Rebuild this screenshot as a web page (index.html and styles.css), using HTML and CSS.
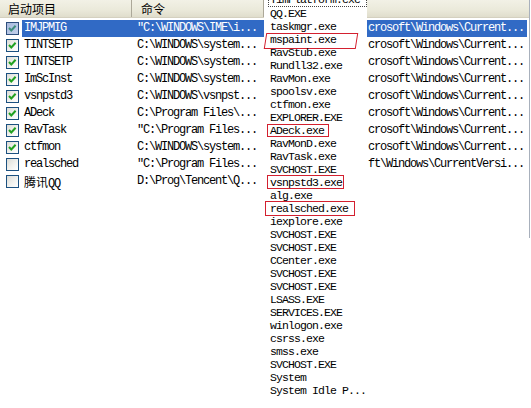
FILE: index.html
```
<!DOCTYPE html>
<html lang="zh-CN">
<head>
<meta charset="utf-8">
<title>启动项目</title>
<link rel="stylesheet" href="styles.css">
</head>
<body>
<div class="screen">
  <div class="listview">
    <div class="head">
      <div class="hcell">启动项目</div>
      <div class="hcell">命令</div>
      <div class="hcell"></div>
    </div>
    <div class="rows">
      <div class="row sel">
        <span class="box"><span class="cb on"><svg viewBox="0 0 11 11"><polyline points="2,5 4.3,7.5 8.6,2.8"/></svg></span></span>
        <span class="c name">IMJPMIG</span>
        <span class="c cmd">"C:\WINDOWS\IME\i...</span>
        <span class="c gap"></span>
        <span class="c loc">crosoft\Windows\Current...</span>
      </div>
      <div class="row">
        <span class="box"><span class="cb on"><svg viewBox="0 0 11 11"><polyline points="2,5 4.3,7.5 8.6,2.8"/></svg></span></span>
        <span class="c name">TINTSETP</span>
        <span class="c cmd">C:\WINDOWS\system...</span>
        <span class="c gap"></span>
        <span class="c loc">crosoft\Windows\Current...</span>
      </div>
      <div class="row">
        <span class="box"><span class="cb on"><svg viewBox="0 0 11 11"><polyline points="2,5 4.3,7.5 8.6,2.8"/></svg></span></span>
        <span class="c name">TINTSETP</span>
        <span class="c cmd">C:\WINDOWS\system...</span>
        <span class="c gap"></span>
        <span class="c loc">crosoft\Windows\Current...</span>
      </div>
      <div class="row">
        <span class="box"><span class="cb on"><svg viewBox="0 0 11 11"><polyline points="2,5 4.3,7.5 8.6,2.8"/></svg></span></span>
        <span class="c name">ImScInst</span>
        <span class="c cmd">C:\WINDOWS\system...</span>
        <span class="c gap"></span>
        <span class="c loc">crosoft\Windows\Current...</span>
      </div>
      <div class="row">
        <span class="box"><span class="cb on"><svg viewBox="0 0 11 11"><polyline points="2,5 4.3,7.5 8.6,2.8"/></svg></span></span>
        <span class="c name">vsnpstd3</span>
        <span class="c cmd">C:\WINDOWS\vsnpst...</span>
        <span class="c gap"></span>
        <span class="c loc">crosoft\Windows\Current...</span>
      </div>
      <div class="row">
        <span class="box"><span class="cb on"><svg viewBox="0 0 11 11"><polyline points="2,5 4.3,7.5 8.6,2.8"/></svg></span></span>
        <span class="c name">ADeck</span>
        <span class="c cmd">C:\Program Files\...</span>
        <span class="c gap"></span>
        <span class="c loc">crosoft\Windows\Current...</span>
      </div>
      <div class="row">
        <span class="box"><span class="cb on"><svg viewBox="0 0 11 11"><polyline points="2,5 4.3,7.5 8.6,2.8"/></svg></span></span>
        <span class="c name">RavTask</span>
        <span class="c cmd">"C:\Program Files...</span>
        <span class="c gap"></span>
        <span class="c loc">crosoft\Windows\Current...</span>
      </div>
      <div class="row">
        <span class="box"><span class="cb on"><svg viewBox="0 0 11 11"><polyline points="2,5 4.3,7.5 8.6,2.8"/></svg></span></span>
        <span class="c name">ctfmon</span>
        <span class="c cmd">C:\WINDOWS\system...</span>
        <span class="c gap"></span>
        <span class="c loc">crosoft\Windows\Current...</span>
      </div>
      <div class="row">
        <span class="box"><span class="cb"></span></span>
        <span class="c name">realsched</span>
        <span class="c cmd">"C:\Program Files...</span>
        <span class="c gap"></span>
        <span class="c loc">ft\Windows\CurrentVersi...</span>
      </div>
      <div class="row">
        <span class="box"><span class="cb"></span></span>
        <span class="c name"><span class="cjk">腾讯</span>QQ</span>
        <span class="c cmd">D:\Prog\Tencent\Q...</span>
        <span class="c gap"></span>
        <span class="c loc"></span>
      </div>
    </div>
  </div>

  <!-- process list pasted over the window -->
  <ul class="procs">
    <li class="focus">TimPlatform.exe</li>
    <li>QQ.EXE</li>
    <li>taskmgr.exe</li>
    <li class="mark m1">mspaint.exe</li>
    <li>RavStub.exe</li>
    <li>Rundll32.exe</li>
    <li>RavMon.exe</li>
    <li>spoolsv.exe</li>
    <li>ctfmon.exe</li>
    <li>EXPLORER.EXE</li>
    <li class="mark m2">ADeck.exe</li>
    <li>RavMonD.exe</li>
    <li>RavTask.exe</li>
    <li>SVCHOST.EXE</li>
    <li class="mark m3">vsnpstd3.exe</li>
    <li>alg.exe</li>
    <li class="mark m4">realsched.exe</li>
    <li>iexplore.exe</li>
    <li>SVCHOST.EXE</li>
    <li>SVCHOST.EXE</li>
    <li>CCenter.exe</li>
    <li>SVCHOST.EXE</li>
    <li>SVCHOST.EXE</li>
    <li>LSASS.EXE</li>
    <li>SERVICES.EXE</li>
    <li>winlogon.exe</li>
    <li>csrss.exe</li>
    <li>smss.exe</li>
    <li>SVCHOST.EXE</li>
    <li>System</li>
    <li>System Idle P...</li>
  </ul>
</div>
</body>
</html>
```

FILE: styles.css
```
body{
    margin: 0;
    background: #fff;
    color: #000;
    font-family: "Liberation Mono", "Noto Sans CJK SC", monospace;
    font-size: 12px;
    letter-spacing: -1.2px;
}
.screen{
    position: relative;
    width: 531px;
    height: 408px;
    overflow: hidden;
}
.cjk{
    font-family: "Noto Sans CJK SC", sans-serif;
    letter-spacing: 0;
}

/* list view */
.listview{
    width: 529px;
    height: 238px;
    border-right: 1px solid #a8b0bc;
}
.head{
    display: grid;
    grid-template-columns: 132px 132px 1fr;
    height: 17px;
    background: linear-gradient(#f2f1e6, #ebeadb 55%, #e0ddcc);
    border-bottom: 1px solid #d4d0bf;
}
.hcell{
    padding-left: 8px;
    line-height: 17px;
    font-family: "Noto Sans CJK SC", sans-serif;
    letter-spacing: 0;
    border-right: 1px solid #aca899;
}
.hcell + .hcell{
    padding-left: 9px;
}
.hcell:last-child{
    border-right: 0;
}
.rows{
    padding-top: 2px;
}
.row{
    display: grid;
    grid-template-columns: 22px 110px 132px 103px 1fr;
    height: 17px;
    line-height: 17px;
    white-space: nowrap;
}
.c{
    overflow: hidden;
}
.name{ padding-left: 2px; }
.cmd{ padding-left: 5px; }
.loc{ padding-left: 1px; margin-right: 2px; }
.row.sel .c{
    background: #316ac5;
    color: #fff;
}

/* xp checkbox */
.box{
    display: flex;
    align-items: center;
    padding-left: 6px;
}
.cb{
    display: block;
    width: 13px;
    height: 13px;
    box-sizing: border-box;
    border: 1px solid #1c5180;
    background: linear-gradient(135deg, #dcdcd6, #f4f4f1 60%, #fff);
}
.cb svg{
    display: block;
    width: 11px;
    height: 11px;
}
.cb polyline{
    fill: none;
    stroke: #21a121;
    stroke-width: 2;
}
.row.sel .cb{
    background: linear-gradient(135deg, #a7b9dc, #c3d1ec);
    border-color: #2e4e7c;
}
.row.sel .cb polyline{
    stroke: #3f8d7c;
}

/* pasted task list */
.procs{
    position: absolute;
    top: -6px;
    left: 264px;
    width: 103px;
    margin: 0;
    padding: 0 0 6px;
    list-style: none;
    background: #fff;
    font-size: 11.5px;
    letter-spacing: -0.9px;
}
.procs li{
    position: relative;
    height: 13px;
    line-height: 13px;
    padding-left: 6px;
    white-space: nowrap;
}
.procs .focus{
    margin-left: 4px;
    padding-left: 1px;
    height: 12px;
    line-height: 12px;
    border: 1px dotted #444;
    border-top: 0;
}
.mark::after{
    content: "";
    position: absolute;
    box-sizing: border-box;
    border: 1.5px solid #d3202f;
}
.m1::after{ left: 1px; top: 0; width: 92px; height: 16px; transform: skewX(-9deg); }
.m2::after{ left: 3px; top: 0; width: 62px; height: 13px; }
.m3::after{ left: 3px; top: -1px; width: 77px; height: 14px; }
.m4::after{ left: 1px; top: -1px; width: 90px; height: 15px; }
```
